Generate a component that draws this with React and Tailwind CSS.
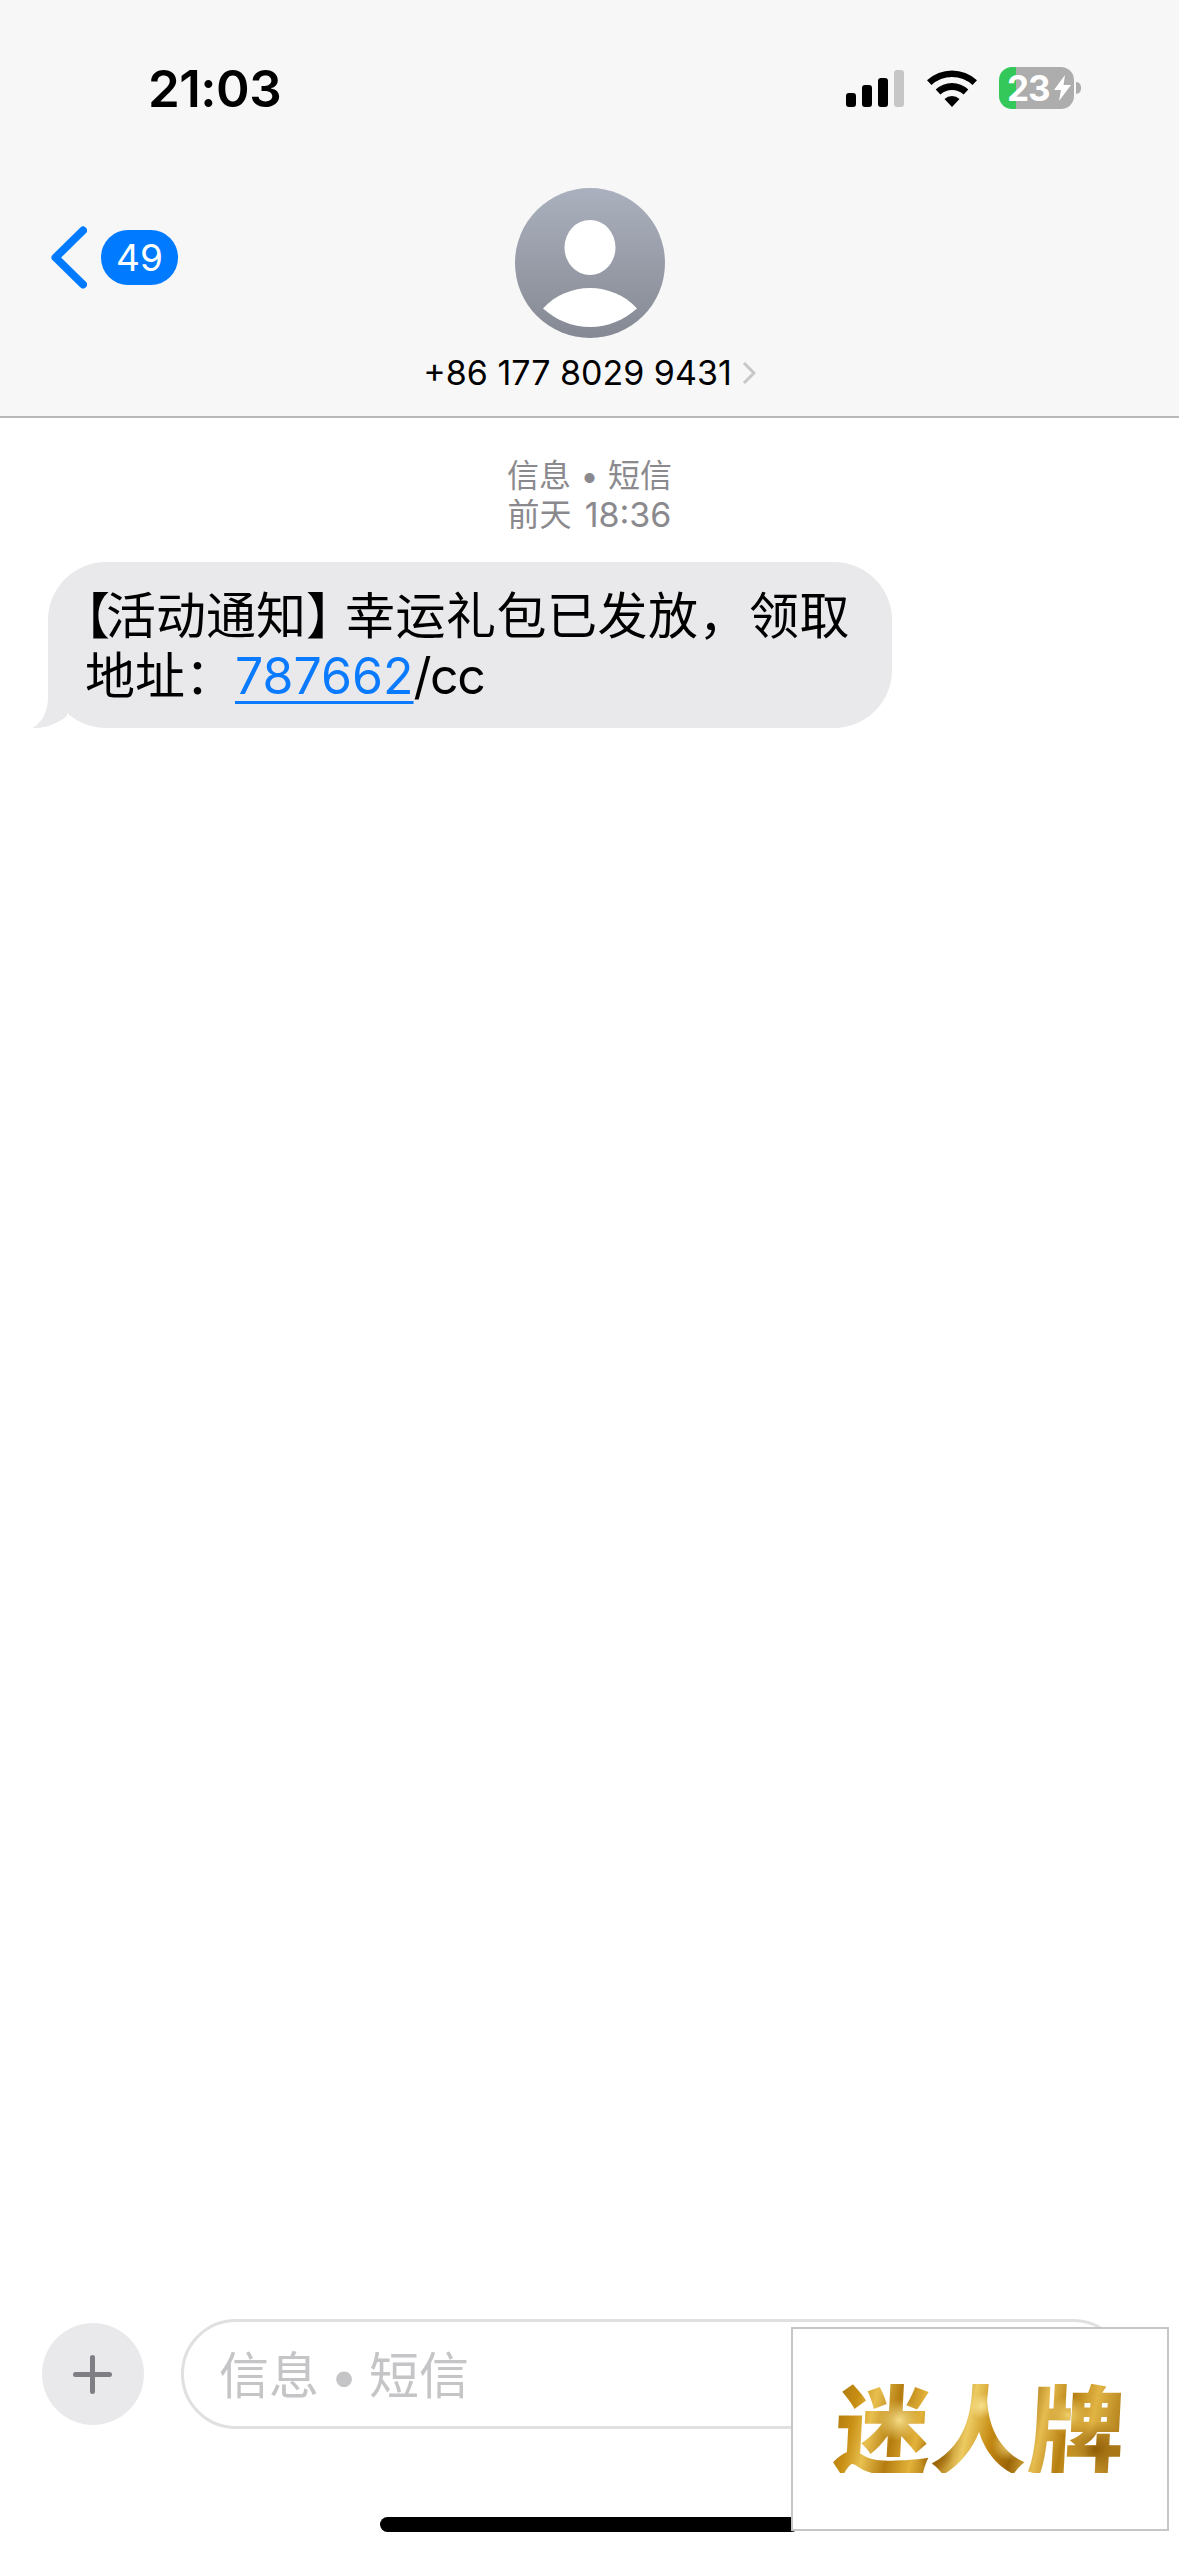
import React from "react";

const Wifi = () => (
  <svg width="50" height="37" viewBox="0 0 50 37" fill="#000">
    <path d="M0 10.3A36.6 36.6 0 0 1 50 10.3L45.5 15.1A30 30 0 0 0 4.5 15.1Z" />
    <path d="M8.7 19.5A24 24 0 0 1 41.3 19.5L36.6 24.6A17 17 0 0 0 13.4 24.6Z" />
    <path d="M17.5 29A11 11 0 0 1 32.5 29L25 37Z" />
  </svg>
);

const Avatar = () => (
  <svg width="150" height="150" viewBox="0 0 150 150">
    <defs>
      <linearGradient id="av" x1="0" y1="0" x2="0" y2="1">
        <stop offset="0" stopColor="#aab0bd" />
        <stop offset="1" stopColor="#858993" />
      </linearGradient>
    </defs>
    <circle cx="75" cy="75" r="75" fill="url(#av)" />
    <ellipse cx="75" cy="59.5" rx="25.5" ry="27.5" fill="#fff" />
    <path d="M28 120.5C40 107 58 100 75 100C92 100 110 107 122 120.5C109 132 93 139 75 139C57 139 41 132 28 120.5Z" fill="#fff" />
  </svg>
);

export default function App() {
  return (
    <div className="relative flex flex-col w-[1179px] h-[2556px] overflow-hidden bg-white font-['Inter','Noto_Sans_CJK_SC',sans-serif]">
      <header className="h-[418px] shrink-0 bg-[#f7f7f7] border-b-2 border-[#b9b9b9] pt-[60px]">
        <div className="flex h-[56px] items-center justify-between pl-[148px] pr-[98px]">
          <span className="text-[51px] leading-none font-semibold text-black tracking-[-0.5px]">21:03</span>
          <div className="flex items-center">
            <div className="flex items-end gap-[6px] h-[37px]">
              <div className="w-[10px] h-[14px] rounded-[3px] bg-black" />
              <div className="w-[10px] h-[22px] rounded-[3px] bg-black" />
              <div className="w-[10px] h-[29px] rounded-[3px] bg-black" />
              <div className="w-[10px] h-[37px] rounded-[3px] bg-[#c6c6c6]" />
            </div>
            <div className="ml-[23px]"><Wifi /></div>
            <div className="ml-[22px] flex items-center">
              <div className="flex items-center w-[75px] h-[42px] rounded-[13px] pl-[8px] bg-[linear-gradient(90deg,#34c759_17px,#adadad_17px)]">
                <span className="text-[35px] leading-none font-bold text-white tracking-[-1px]">23</span>
                <svg className="ml-[4px]" width="17" height="26" viewBox="0 0 17 26" fill="#fff">
                  <path d="M11 0L0 15H7L5 26L17 10H9.5Z" />
                </svg>
              </div>
              <div className="ml-[2px] w-[5px] h-[12px] rounded-r-[5px] bg-[#adadad]" />
            </div>
          </div>
        </div>
        <div className="mt-[72px] grid grid-cols-[1fr_auto_1fr]">
          <div className="flex items-center h-[139px] pl-[51px]">
            <svg width="36" height="63" viewBox="0 0 36 63" fill="none" stroke="#007aff" strokeWidth="8" strokeLinecap="round" strokeLinejoin="round">
              <path d="M32 4.500L4.500 31.500L32 58.500" />
            </svg>
            <div className="ml-[14px] flex items-center justify-center w-[77px] h-[55px] rounded-[27px] bg-[#007aff] text-white text-[37px] leading-none">49</div>
          </div>
          <div className="flex flex-col items-center">
            <Avatar />
            <div className="mt-[19px] flex items-center h-[32px]">
              <span className="text-[34px] leading-none text-black whitespace-nowrap">+86 177 8029 9431</span>
              <svg className="ml-[10px]" width="14" height="24" viewBox="0 0 14 24" fill="none" stroke="#c7c7c7" strokeWidth="3">
                <path d="M2 2L12 12L2 22" />
              </svg>
            </div>
          </div>
          <div />
        </div>
      </header>

      <main className="flex-1">
        <div className="pt-[38px] flex flex-col items-center text-[32px] leading-[39px] text-[#8a8a8e]">
          <div className="flex items-center"><span>信息</span><span className="w-[37px] text-center">•</span><span>短信</span></div>
          <div className="flex items-center gap-[13px]"><span>前天</span><span className="text-[34px]">18:36</span></div>
        </div>
        <div className="relative ml-[48px] mt-[28px] w-[844px] h-[166px] rounded-[58px] bg-[#e9e9eb] pl-[37px] pt-[24px] text-[50px] leading-[60px] text-black whitespace-nowrap">
          <svg className="absolute left-[-16px] bottom-0" width="40" height="58" viewBox="0 0 40 58" fill="#e9e9eb">
            <path d="M16 0V28C16 42 9 54 0 58C12 58.500 26 54 35 46L40 0Z" />
          </svg>
          <div>
            <span className="[font-feature-settings:'halt'] mr-[-4px]">【</span>
            <span>活动通知</span>
            <span className="[font-feature-settings:'halt'] mr-[14px]">】</span>
            <span className="tracking-[0.5px]">幸运礼包已发放，领取</span>
          </div>
          <div>
            <span>地址：</span>
            <span className="text-[#0a7aff] underline decoration-[3px] underline-offset-[7px]">787662</span>
            <span className="tracking-[-1.5px]">/cc</span>
          </div>
        </div>
      </main>

      <div className="flex items-center h-[110px] shrink-0 pl-[42px] pr-[51px] gap-[37px]">
        <div className="flex items-center justify-center w-[102px] h-[102px] shrink-0 rounded-full bg-[#e9e9eb]">
          <svg className="-ml-[2px]" width="39" height="39" viewBox="0 0 39 39" fill="none" stroke="#7e7e84" strokeWidth="5" strokeLinecap="round">
            <path d="M19.500 2.500V36.500M2.500 19.500H36.500" />
          </svg>
        </div>
        <div className="flex-1 flex items-center h-[110px] rounded-[55px] border-[3px] border-[#e0e0e0] pl-[35px] pt-[3px] text-[50px] leading-none text-[#c5c5c7]">
          <span>信息</span><span className="w-[50px] text-center">•</span><span>短信</span>
        </div>
      </div>

      <div className="mt-[88px] mb-[24px] mx-auto w-[419px] h-[15px] shrink-0 rounded-full bg-black" />

      <div className="absolute right-[10px] bottom-[25px] flex items-center justify-center w-[378px] h-[204px] bg-white border-2 border-[#c6c6c6]">
        <span className="mt-[-8px] inline-block -skew-x-3 whitespace-nowrap text-[96px] leading-none font-black tracking-[1px] font-['Noto_Sans_CJK_SC',sans-serif] text-transparent bg-clip-text bg-[radial-gradient(circle_at_22%_45%,#f5dc86_0,transparent_9%),radial-gradient(circle_at_50%_30%,#f7e08e_0,transparent_8%),radial-gradient(circle_at_60%_70%,#f2d472_0,transparent_9%),radial-gradient(circle_at_80%_40%,#f0cf68_0,transparent_8%),radial-gradient(circle_at_90%_75%,#8f5c06_0,transparent_10%),radial-gradient(circle_at_35%_80%,#8f5c06_0,transparent_9%),linear-gradient(100deg,#a8720c_0%,#c98f14_8%,#e8c050_14%,#b47c0e_22%,#e2b23a_30%,#a56c08_38%,#eccb62_46%,#c58a12_54%,#9a6406_62%,#e6bc50_70%,#b67e10_78%,#e0b444_86%,#9f6a0a_100%)]">迷人牌</span>
      </div>
    </div>
  );
}
